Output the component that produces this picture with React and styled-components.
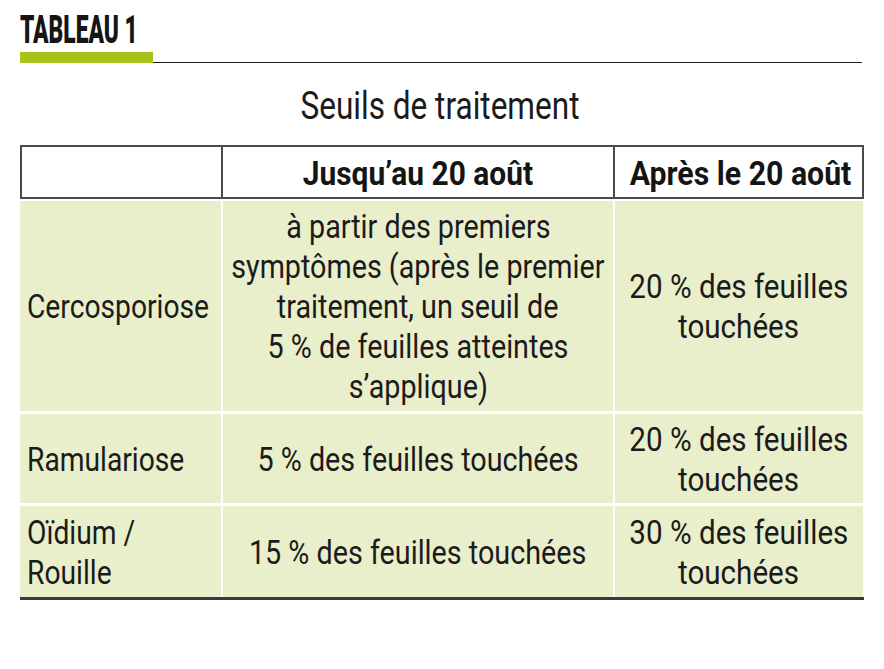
import React from 'react';
import styled, { createGlobalStyle } from 'styled-components';

const GlobalStyle = createGlobalStyle`
  html, body {
    margin: 0;
    padding: 0;
    background: #ffffff;
  }
  body {
    font-family: Roboto, 'Liberation Sans', sans-serif;
    color: #1b1b1b;
  }
`;

const Page = styled.div`
  width: 884px;
  height: 669px;
  padding: 0 20px;
  box-sizing: border-box;
  background: #fff;
`;

const TopBar = styled.div`
  display: flex;
  align-items: flex-end;
  padding-top: 10px;
`;

const Label = styled.div`
  display: flex;
  flex-direction: column;
  width: 133px;
`;

const LabelText = styled.span`
  display: block;
  font-size: 38px;
  line-height: 40px;
  font-weight: 900;
  color: #151515;
  transform: scaleX(0.6);
  transform-origin: left center;
  white-space: nowrap;
`;

const GreenBar = styled.div`
  height: 11px;
  margin-top: 2px;
  background: #a7c41c;
`;

const Rule = styled.div`
  flex: 1;
  height: 1px;
  background: #1a1a1a;
  margin-right: 2px;
`;

const Title = styled.h2`
  margin: 20px 0 0;
  text-align: center;
  font-size: 38px;
  line-height: 46px;
  font-weight: 400;
  color: #1b1b1b;
  padding-right: 4px;
`;

const Line = styled.span`
  display: block;
  white-space: nowrap;
  transform: scaleX(${p => p.scale || 0.845});
  transform-origin: ${p => (p.left ? 'left center' : 'center center')};
`;

const Table = styled.div`
  margin-top: 16px;
  width: 844px;
`;

const HeadRow = styled.div`
  display: grid;
  grid-template-columns: 201px 392px 251px;
  border: 2px solid #4a4a4a;
  box-sizing: border-box;
  height: 54px;
  background: #fff;
`;

const HeadCell = styled.div`
  display: flex;
  align-items: center;
  justify-content: center;
  font-size: 34px;
  font-weight: 700;
  color: #151515;
  border-right: ${p => (p.last ? 'none' : '2px solid #4a4a4a')};
  padding-top: 2px;
`;

const Body = styled.div`
  display: grid;
  grid-template-columns: 201px 390px 249px;
  grid-template-rows: 210px 89px 91px;
  column-gap: 2px;
  row-gap: 3px;
  padding-top: 2px;
  background: #fff;
  border-bottom: 3px solid #3a3a3a;
`;

const Cell = styled.div`
  display: flex;
  flex-direction: column;
  justify-content: center;
  align-items: ${p => (p.left ? 'flex-start' : 'center')};
  text-align: ${p => (p.left ? 'left' : 'center')};
  padding-left: ${p => (p.left ? '7px' : '0')};
  background: #e9eecb;
  font-size: 34px;
  line-height: 40px;
  color: #1b1b1b;
  margin-right: ${p => (p.last ? '1px' : '0')};
`;

const rows = [
  {
    name: ['Cercosporiose'],
    before: [
      'à partir des premiers',
      'symptômes (après le premier',
      'traitement, un seuil de',
      '5 % de feuilles atteintes',
      's’applique)',
    ],
    after: ['20 % des feuilles', 'touchées'],
  },
  {
    name: ['Ramulariose'],
    before: ['5 % des feuilles touchées'],
    after: ['20 % des feuilles', 'touchées'],
  },
  {
    name: ['Oïdium /', 'Rouille'],
    before: ['15 % des feuilles touchées'],
    after: ['30 % des feuilles', 'touchées'],
  },
];

function Lines({ items, left, scale }) {
  return items.map(t => (
    <Line key={t} left={left} scale={scale}>
      {t}
    </Line>
  ));
}

export default function App() {
  return (
    <Page>
      <GlobalStyle />
      <TopBar>
        <Label>
          <LabelText>TABLEAU 1</LabelText>
          <GreenBar />
        </Label>
        <Rule />
      </TopBar>

      <Title>
        <Line scale={0.83}>Seuils de traitement</Line>
      </Title>

      <Table>
        <HeadRow>
          <HeadCell />
          <HeadCell>
            <Line scale={0.88}>Jusqu’au 20 août</Line>
          </HeadCell>
          <HeadCell last>
            <Line scale={0.89}>Après le 20 août</Line>
          </HeadCell>
        </HeadRow>
        <Body>
          {rows.map(r => (
            <React.Fragment key={r.name[0]}>
              <Cell left>
                <Lines items={r.name} left scale={0.83} />
              </Cell>
              <Cell>
                <Lines items={r.before} />
              </Cell>
              <Cell last>
                <Lines items={r.after} scale={0.87} />
              </Cell>
            </React.Fragment>
          ))}
        </Body>
      </Table>
    </Page>
  );
}
